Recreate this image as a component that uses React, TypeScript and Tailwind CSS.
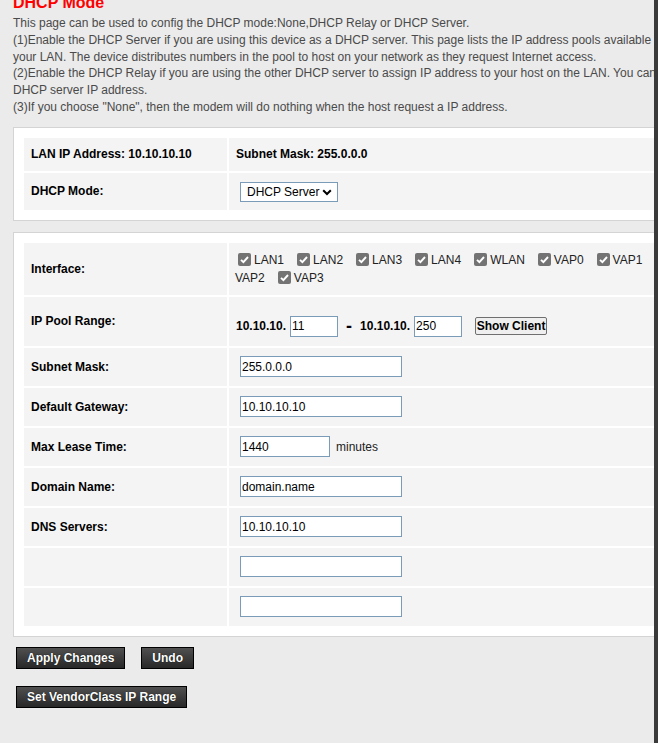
import type { ReactNode } from "react"

const inputCls =
  "h-[21px] border border-[#7a9cb8] bg-white px-[1px] text-[12px] text-black outline-none"

function Panel({ children }: { children: ReactNode }) {
  return (
    <div className="mt-[11px] w-[700px] border border-[#d4d4d4] bg-white p-[10px]">
      <div className="grid grid-cols-[203px_1fr] gap-[2px]">{children}</div>
    </div>
  )
}

function Row({ label, h, children, right = "pl-[11px]" }: { label?: string; h: string; children?: ReactNode; right?: string }) {
  return (
    <>
      <div className={`flex items-center bg-[#f4f4f4] pl-[7px] font-bold text-black ${h}`}>{label}</div>
      <div className={`flex items-center bg-[#f4f4f4] ${right} ${h}`}>{children}</div>
    </>
  )
}

function Check({ label, last }: { label?: string; last?: boolean }) {
  return (
    <label className="inline-flex items-center">
      <span className="relative ml-[3px] mr-[3px] flex h-[13px] w-[13px]">
        <input type="checkbox" defaultChecked className="h-[13px] w-[13px] appearance-none rounded-[2px] bg-[#737373]" />
        <svg viewBox="0 0 13 13" className="pointer-events-none absolute inset-0 h-[13px] w-[13px]">
          <path d="M3 6.8 5.4 9.2 10 4" fill="none" stroke="white" strokeWidth="1.9" />
        </svg>
      </span>
      {label && <span className={last ? "" : "mr-[10px]"}>{label}</span>}
    </label>
  )
}

function DarkButton({ children }: { children: ReactNode }) {
  return (
    <button className="h-[22px] border border-black bg-linear-to-b from-[#505050] to-[#282828] px-[10px] text-[12px] font-bold text-white [text-shadow:0_0_1px_#000]">
      {children}
    </button>
  )
}

export default function App() {
  return (
    <div className="flex h-[743px] w-[658px] overflow-hidden bg-[#ebebeb] font-['Liberation_Sans',Arial,sans-serif] text-[12px]">
      <div className="w-[654px] shrink-0 overflow-hidden pl-[13px]">
        <h1 className="-mt-[6px] whitespace-nowrap text-[16px] font-bold leading-[18px] text-[#ff0000]">DHCP Mode</h1>
        <p className="mt-[3px] whitespace-nowrap leading-[16.75px] text-[#4a4a4a]">
          This page can be used to config the DHCP mode:None,DHCP Relay or DHCP Server.
          <br />
          (1)Enable the DHCP Server if you are using this device as a DHCP server. This page lists the IP address pools available to hosts on
          <br />
          your LAN. The device distributes numbers in the pool to host on your network as they request Internet access.
          <br />
          (2)Enable the DHCP Relay if you are using the other DHCP server to assign IP address to your host on the LAN. You can set the
          <br />
          DHCP server IP address.
          <br />
          (3)If you choose "None", then the modem will do nothing when the host request a IP address.
        </p>

        {/* LAN info */}
        <Panel>
          <Row label="LAN IP Address: 10.10.10.10" h="h-[33px]" right="pl-[7px] font-bold text-black">
            Subnet Mask: 255.0.0.0
          </Row>
          <Row label="DHCP Mode:" h="h-[37px]">
            <div className="relative mt-[1px] h-[20px] w-[98px]">
              <select
                defaultValue="server"
                className="h-[20px] w-[98px] appearance-none border border-[#7a9cb8] bg-white pl-[6px] text-[12px] text-black outline-none"
              >
                <option value="none">None</option>
                <option value="relay">DHCP Relay</option>
                <option value="server">DHCP Server</option>
              </select>
              <svg viewBox="0 0 10 7" className="pointer-events-none absolute right-[6px] top-[7px] h-[7px] w-[10px]">
                <path d="M1.2 1.2 5 5 8.8 1.2" fill="none" stroke="black" strokeWidth="2" />
              </svg>
            </div>
          </Row>
        </Panel>

        {/* DHCP server settings */}
        <Panel>
          <Row label="Interface:" h="h-[52px]" right="pl-[6px]">
            <div className="leading-[18px] text-[#222]">
              <div className="flex whitespace-nowrap">
                <Check label="LAN1" />
                <Check label="LAN2" />
                <Check label="LAN3" />
                <Check label="LAN4" />
                <Check label="WLAN" />
                <Check label="VAP0" />
                <Check label="VAP1" />
                <Check />
              </div>
              <div className="flex whitespace-nowrap">
                <span className="mr-[10px]">VAP2</span>
                <Check label="VAP3" last />
              </div>
            </div>
          </Row>
          <Row label="IP Pool Range:" h="h-[49px]" right="pl-[7px] pt-[10px]">
            <span className="font-bold text-black">10.10.10.</span>
            <input className={`${inputCls} ml-[4px] w-[48px]`} defaultValue="11" />
            <span className="mx-[8px] text-[18px] font-bold leading-none text-black">-</span>
            <span className="font-bold text-black">10.10.10.</span>
            <input className={`${inputCls} ml-[4px] w-[48px]`} defaultValue="250" />
            <button className="ml-[13px] h-[18px] w-[72px] rounded-[2px] border border-[#6f6f6f] bg-[#efefef] text-[12px] font-bold leading-none text-black">
              Show Client
            </button>
          </Row>
          <Row label="Subnet Mask:" h="h-[38px]">
            <input className={`${inputCls} w-[162px]`} defaultValue="255.0.0.0" />
          </Row>
          <Row label="Default Gateway:" h="h-[38px]">
            <input className={`${inputCls} w-[162px]`} defaultValue="10.10.10.10" />
          </Row>
          <Row label="Max Lease Time:" h="h-[38px]">
            <input className={`${inputCls} w-[90px]`} defaultValue="1440" />
            <span className="ml-[6px] text-[#222]">minutes</span>
          </Row>
          <Row label="Domain Name:" h="h-[38px]">
            <input className={`${inputCls} w-[162px]`} defaultValue="domain.name" />
          </Row>
          <Row label="DNS Servers:" h="h-[38px]">
            <input className={`${inputCls} w-[162px]`} defaultValue="10.10.10.10" />
          </Row>
          <Row h="h-[38px]">
            <input className={`${inputCls} w-[162px]`} />
          </Row>
          <Row h="h-[38px]">
            <input className={`${inputCls} w-[162px]`} />
          </Row>
        </Panel>

        <div className="ml-[3px] mt-[10px] flex gap-[16px]">
          <DarkButton>Apply Changes</DarkButton>
          <DarkButton>Undo</DarkButton>
        </div>
        <div className="ml-[3px] mt-[17px]">
          <DarkButton>Set VendorClass IP Range</DarkButton>
        </div>
      </div>
      <div className="w-[4px] shrink-0 bg-[#3a3a3a]" />
    </div>
  )
}
